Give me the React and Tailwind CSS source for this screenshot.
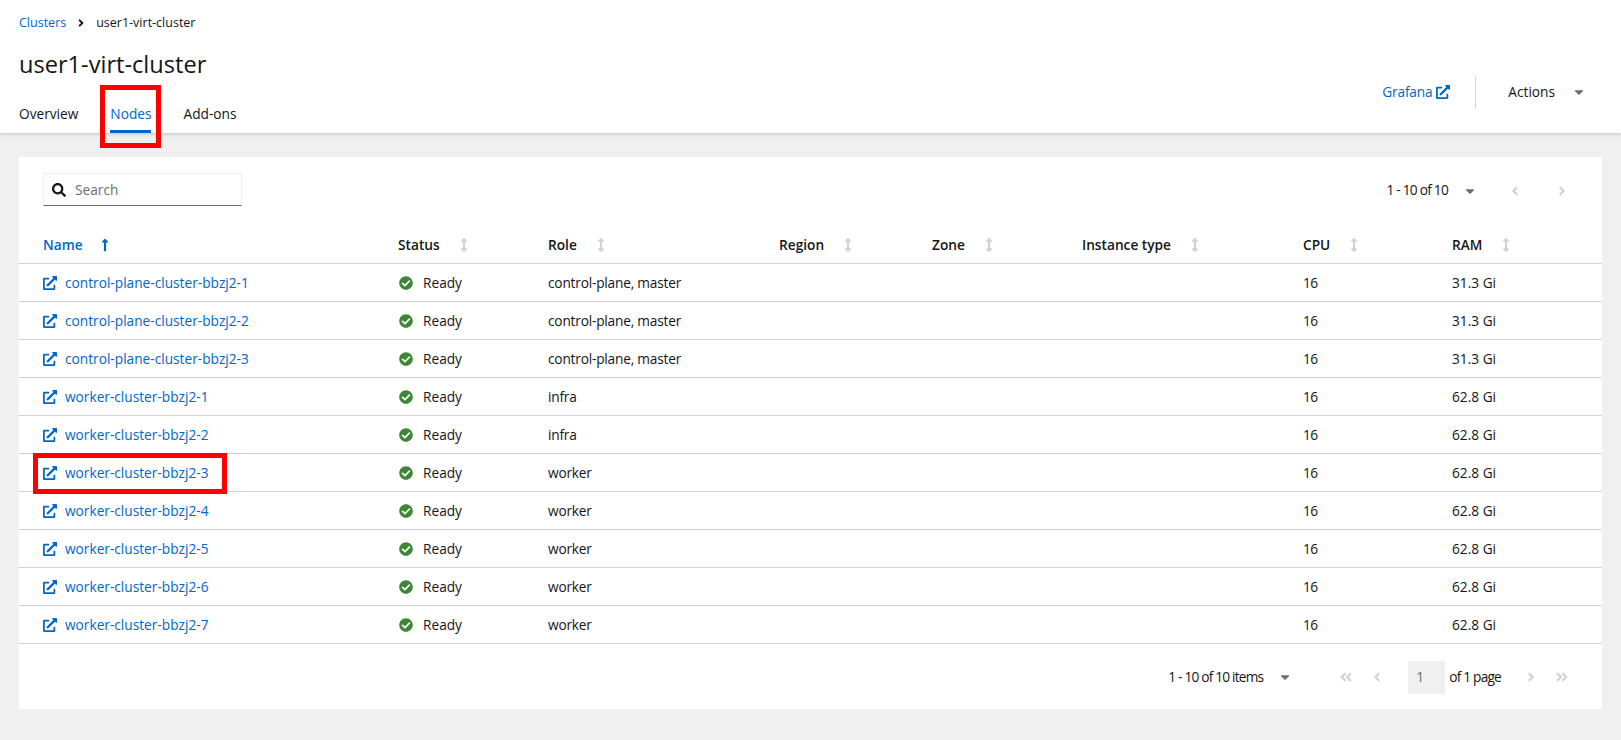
import {
  FaAngleDoubleLeft,
  FaAngleDoubleRight,
  FaAngleLeft,
  FaAngleRight,
  FaArrowsAltV,
  FaCaretDown,
  FaCheckCircle,
  FaExternalLinkAlt,
  FaLongArrowAltUp,
  FaSearch,
} from "react-icons/fa";

const nodes = [
  { name: "control-plane-cluster-bbzj2-1", role: "control-plane, master", ram: "31.3 Gi" },
  { name: "control-plane-cluster-bbzj2-2", role: "control-plane, master", ram: "31.3 Gi" },
  { name: "control-plane-cluster-bbzj2-3", role: "control-plane, master", ram: "31.3 Gi" },
  { name: "worker-cluster-bbzj2-1", role: "infra", ram: "62.8 Gi" },
  { name: "worker-cluster-bbzj2-2", role: "infra", ram: "62.8 Gi" },
  { name: "worker-cluster-bbzj2-3", role: "worker", ram: "62.8 Gi", marked: true },
  { name: "worker-cluster-bbzj2-4", role: "worker", ram: "62.8 Gi" },
  { name: "worker-cluster-bbzj2-5", role: "worker", ram: "62.8 Gi" },
  { name: "worker-cluster-bbzj2-6", role: "worker", ram: "62.8 Gi" },
  { name: "worker-cluster-bbzj2-7", role: "worker", ram: "62.8 Gi" },
];

const columns = ["Status", "Role", "Region", "Zone", "Instance type", "CPU", "RAM"];
const gridCols = "grid grid-cols-[355px_150px_231px_153px_150px_221px_149px_1fr]";

function HeaderCell({ label }) {
  return (
    <div className="flex items-center font-semibold text-[#151515]">
      <span>{label}</span>
      <FaArrowsAltV className="ml-[17px] text-[14px] text-[#d2d2d2]" />
    </div>
  );
}

function NodeRow({ node }) {
  return (
    <div className={`${gridCols} relative h-[38px] items-center border-b border-[#d2d2d2] pl-6 pt-[2px]`}>
      <a className="flex items-center text-[#06c]">
        <FaExternalLinkAlt className="mr-2 text-[14px]" />
        {node.name}
      </a>
      <div className="flex items-center">
        <FaCheckCircle className="mr-[11px] ml-px text-[14px] text-[#3e8635]" />
        <span className="-ml-px">Ready</span>
      </div>
      <div className="tracking-[-0.2px]">{node.role}</div>
      <div />
      <div />
      <div />
      <div className="tracking-[-0.6px]">16</div>
      <div>{node.ram}</div>
      {node.marked && (
        <div className="absolute top-[-1px] left-[14px] h-[41px] w-[194px] border-[5px] border-[#ff0000]" />
      )}
    </div>
  );
}

export default function App() {
  return (
    <div className="flex h-[740px] flex-col bg-[#f0f0f0] font-['Open_Sans',sans-serif] text-[13.7px] text-[#151515]">
      <header className="relative z-10 h-[133px] bg-white pl-[19px] pr-[35px] shadow-[0_1px_4px_rgba(0,0,0,0.2)]">
        <nav className="flex items-center pt-[14px] text-[12.5px]">
          <a className="text-[#06c]">Clusters</a>
          <FaAngleRight className="mx-[9px] text-[12px]" />
          <span>user1-virt-cluster</span>
        </nav>
        <div className="flex justify-between">
          <div>
            <h1 className="mt-[16px] text-[23.6px] leading-[30px]">user1-virt-cluster</h1>
            <div className="mt-[24px] flex">
              <div className="pt-px">Overview</div>
              <div className="relative ml-[32px] h-[30px] border-b-[3px] border-[#06c] pt-px text-[#06c]">
                Nodes
                <div className="absolute top-[-18px] left-[-10px] h-[63px] w-[61px] border-[5px] border-[#ff0000]" />
              </div>
              <div className="ml-[32px] pt-px">Add-ons</div>
            </div>
          </div>
          <div className="mt-[43px] flex h-[33px] items-center">
            <a className="flex items-center text-[#06c]">
              <span className="tracking-[-0.2px]">Grafana</span>
              <FaExternalLinkAlt className="ml-1 text-[14px]" />
            </a>
            <div className="mr-[32px] ml-[25px] h-[33px] w-px bg-[#d2d2d2]" />
            <span>Actions</span>
            <FaCaretDown className="ml-[17px] text-[14px] text-[#6a6e73]" />
          </div>
        </div>
      </header>

      <main className="px-[19px] pt-[24px]">
        <section className="h-[552px] w-[1583px] bg-white">
          <div className="flex h-[78px] items-start justify-between pl-6 pr-[33px] pt-4">
            <div className="flex h-[33px] w-[199px] items-center border border-[#f0f0f0] border-b-[#6a6e73] pl-2 pt-px">
              <FaSearch className="text-[14px]" />
              <span className="ml-[9px] text-[#6a6e73]">Search</span>
            </div>
            <div className="mt-px flex h-[33px] items-center">
              <span className="font-medium tracking-[-0.75px]">1 - 10 <span className="font-normal">of</span> 10</span>
              <FaCaretDown className="ml-[15px] text-[14px] text-[#6a6e73]" />
              <FaAngleLeft className="ml-[31px] text-[14px] text-[#d2d2d2]" />
              <FaAngleRight className="ml-[33px] text-[14px] text-[#d2d2d2]" />
            </div>
          </div>

          <div className={`${gridCols} h-[29px] items-start border-b border-[#d2d2d2] pl-6`}>
            <div className="flex items-center font-semibold text-[#06c]">
              <span>Name</span>
              <FaLongArrowAltUp className="ml-[15px] text-[14px]" />
            </div>
            {columns.map((label) => (
              <HeaderCell key={label} label={label} />
            ))}
          </div>

          {nodes.map((node) => (
            <NodeRow key={node.name} node={node} />
          ))}

          <div className="flex h-[66px] items-center justify-end pr-[33px]">
            <span className="font-medium tracking-[-0.8px]">1 - 10 <span className="font-normal">of</span> 10 <span className="font-normal">items</span></span>
            <FaCaretDown className="ml-[15px] text-[14px] text-[#6a6e73]" />
            <FaAngleDoubleLeft className="ml-[47px] text-[14px] text-[#d2d2d2]" />
            <FaAngleLeft className="ml-[17px] text-[14px] text-[#d2d2d2]" />
            <div className="ml-[24px] flex h-[33px] w-[37px] items-center bg-[#f0f0f0] pl-2 text-[#6a6e73]">1</div>
            <span className="ml-1 tracking-[-0.8px]">of 1 page</span>
            <FaAngleRight className="ml-[23px] text-[14px] text-[#d2d2d2]" />
            <FaAngleDoubleRight className="ml-[17px] text-[14px] text-[#d2d2d2]" />
          </div>
        </section>
      </main>
    </div>
  );
}
